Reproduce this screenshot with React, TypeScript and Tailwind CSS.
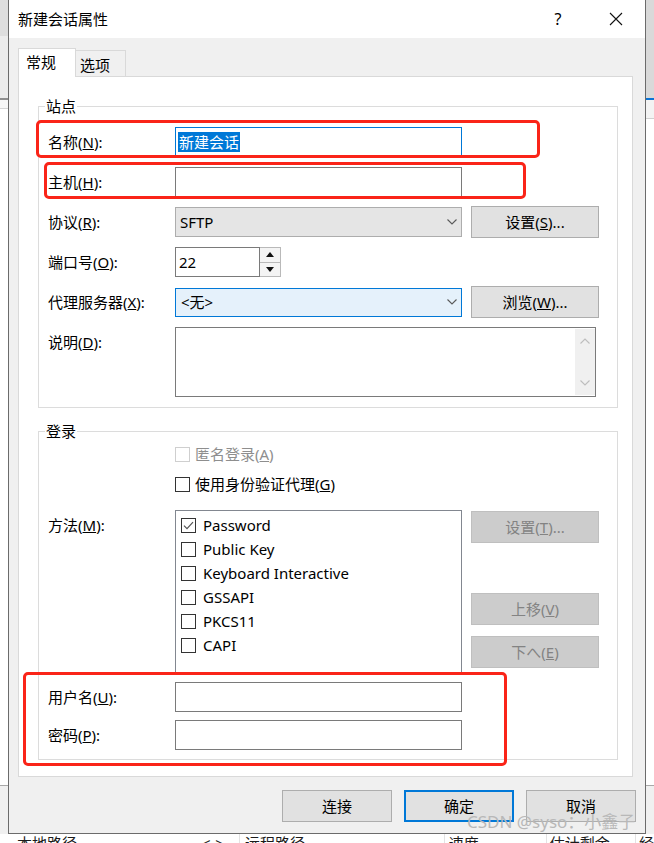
import React from 'react';

type Kids = { children?: React.ReactNode };

function Chevron({ color = '#5a5a5a', up = false }: { color?: string; up?: boolean }) {
  return (
    <svg width="10" height="6" viewBox="0 0 10 6">
      <path d={up ? 'M0.5 5.5 L5 1 L9.5 5.5' : 'M0.5 0.5 L5 5 L9.5 0.5'} fill="none" stroke={color} strokeWidth="1.1" />
    </svg>
  );
}

function Tri({ up }: { up?: boolean }) {
  return (
    <svg width="8" height="5" viewBox="0 0 8 5">
      <path d={up ? 'M0 5 L4 0 L8 5 Z' : 'M0 0 L4 5 L8 0 Z'} fill="#111" />
    </svg>
  );
}

function Box({ checked, disabled }: { checked?: boolean; disabled?: boolean }) {
  return (
    <span
      className={
        disabled
          ? 'flex h-[15px] w-[15px] shrink-0 items-center justify-center border border-[#cfcfcf] bg-white'
          : 'flex h-[15px] w-[15px] shrink-0 items-center justify-center border border-[#333333] bg-white'
      }
    >
      {checked && (
        <svg width="11" height="9" viewBox="0 0 11 9">
          <path d="M1 4.6 L4 7.6 L10 1.2" fill="none" stroke="#555" strokeWidth="1.2" />
        </svg>
      )}
    </span>
  );
}

function Btn({ children, disabled, className = '' }: Kids & { disabled?: boolean; className?: string }) {
  return (
    <div
      className={
        (disabled
          ? 'flex h-[32px] w-[128px] items-center justify-center border border-[#bfbfbf] bg-[#cccccc] text-[#838383] '
          : 'flex h-[32px] w-[128px] items-center justify-center border border-[#adadad] bg-[#e1e1e1] ') + className
      }
    >
      {children}
    </div>
  );
}

function Row({ label, children, className = '' }: Kids & { label: React.ReactNode; className?: string }) {
  return (
    <div className={'flex h-[30px] items-center ' + className}>
      <div className="w-[136px] pl-[9px]">{label}</div>
      {children}
    </div>
  );
}

function TextInput() {
  return <div className="h-[30px] w-[287px] border border-[#7a7a7a] bg-white" />;
}

function LeftStrip() {
  return (
    <div className="flex w-[8px] flex-col">
      <div className="h-[36px] bg-[#dedede]" />
      <div className="h-[62px] bg-[#ececec]" />
      <div className="h-[2px] bg-[#8f8f8f]" />
      <div className="h-[8px] bg-[#f7f7f7]" />
      <div className="h-px bg-[#d5d5d5]" />
      <div className="flex-1 bg-white" />
      <div className="h-px bg-[#a8a8a8]" />
      <div className="h-[48px] bg-[#f0f0f0]" />
    </div>
  );
}

function RightStrip() {
  return (
    <div className="flex w-[8px] flex-col">
      <div className="h-[98px] bg-[#d9d9d9]" />
      <div className="h-[2px] bg-[#0a74d6]" />
      <div className="h-[18px] bg-[#f3f3f3]" />
      <div className="h-px bg-[#d0d0d0]" />
      <div className="flex-1 bg-white" />
      <div className="h-px bg-[#a8a8a8]" />
      <div className="h-[48px] bg-[#f0f0f0]" />
    </div>
  );
}

const methods = ['Password', 'Public Key', 'Keyboard Interactive', 'GSSAPI', 'PKCS11', 'CAPI'];

function Dialog() {
  return (
    <div className="flex w-[638px] flex-col border-x border-b border-[#6b6b6b] bg-[#f0f0f0]">
      {/* title bar */}
      <div className="flex h-[38px] items-center bg-white pl-[9px]">
        <span>新建会话属性</span>
        <span className="ml-auto flex w-[58px] justify-center text-[16px]">?</span>
        <span className="flex w-[58px] justify-center">
          <svg width="14" height="14" viewBox="0 0 14 14">
            <path d="M1 1 L13 13 M13 1 L1 13" stroke="#111" strokeWidth="1.1" />
          </svg>
        </span>
      </div>

      {/* tabs */}
      <div className="flex h-[38px] items-end pl-[9px]">
        <div className="relative z-10 -mb-px h-[29px] w-[58px] border-x border-t border-[#d9d9d9] bg-white pl-[7px] pt-[3px]">
          常规
        </div>
        <div className="h-[26px] w-[50px] border-r border-t border-[#d9d9d9] bg-[#f0f0f0] pl-[4px] pt-[4px]">选项</div>
      </div>

      {/* panel */}
      <div className="ml-[9px] h-[701px] w-[615px] border border-[#d9d9d9] bg-white pl-[19px] pt-[20px]">
        <fieldset className="w-[580px] border border-[#dcdcdc] pb-[10px]">
          <legend className="ml-[6px] px-px leading-[18px]">站点</legend>
          <div className="flex flex-col gap-[10px] pt-[12px]">
            <Row label={<>名称(<u>N</u>):</>}>
              <div className="flex h-[30px] w-[287px] items-center border border-[#0078d7] bg-white pl-[2px]">
                <span className="bg-[#0078d7] px-px text-white">新建会话</span>
              </div>
            </Row>
            <Row label={<>主机(<u>H</u>):</>}>
              <TextInput />
            </Row>
            <Row label={<>协议(<u>R</u>):</>}>
              <div className="flex h-[30px] w-[287px] items-center border border-[#adadad] bg-[#e5e5e5] pl-[4px] pr-[4px]">
                <span>SFTP</span>
                <span className="ml-auto flex">
                  <Chevron />
                </span>
              </div>
              <Btn className="ml-[9px]">
                设置(<u>S</u>)...
              </Btn>
            </Row>
            <Row label={<>端口号(<u>O</u>):</>}>
              <div className="flex h-[30px] w-[106px]">
                <div className="flex w-[85px] items-center border border-[#7a7a7a] bg-white pl-[3px]">22</div>
                <div className="flex w-[21px] flex-col border-y border-r border-[#b9b9b9] bg-[#f4f4f4]">
                  <div className="flex flex-1 items-center justify-center border-b border-[#b9b9b9]">
                    <Tri up />
                  </div>
                  <div className="flex flex-1 items-center justify-center">
                    <Tri />
                  </div>
                </div>
              </div>
            </Row>
            <Row label={<>代理服务器(<u>X</u>):</>}>
              <div className="flex h-[29px] w-[287px] items-center border border-[#0078d7] bg-[#e5f1fb] pl-[5px] pr-[4px]">
                <span>&lt;无&gt;</span>
                <span className="ml-auto flex">
                  <Chevron />
                </span>
              </div>
              <Btn className="ml-[9px]">
                浏览(<u>W</u>)...
              </Btn>
            </Row>
            <div className="flex h-[70px] items-start">
              <div className="flex h-[30px] w-[136px] items-center pl-[9px]">
                说明(<u>D</u>):
              </div>
              <div className="flex h-[70px] w-[421px] justify-end border border-[#7a7a7a] bg-white py-px">
                <div className="flex w-[20px] flex-col items-center justify-between bg-[#f0f0f0] py-[9px]">
                  <Chevron color="#bdbdbd" up />
                  <Chevron color="#bdbdbd" />
                </div>
              </div>
            </div>
          </div>
        </fieldset>

        <fieldset className="mt-[14px] w-[580px] border border-[#dcdcdc] pb-[9px]">
          <legend className="ml-[6px] px-px leading-[18px]">登录</legend>
          <div className="flex flex-col pt-[2px]">
            <div className="flex h-[24px] items-center pl-[136px]">
              <Box disabled />
              <span className="ml-[5px] text-[#8e8e8e]">
                匿名登录(<u>A</u>)
              </span>
            </div>
            <div className="mt-[6px] flex h-[24px] items-center pl-[136px]">
              <Box />
              <span className="ml-[5px]">
                使用身份验证代理(<u>G</u>)
              </span>
            </div>
            <div className="mt-[14px] flex h-[163px] items-start">
              <div className="flex h-[30px] w-[136px] items-center pl-[9px]">
                方法(<u>M</u>):
              </div>
              <div className="h-[163px] w-[287px] border border-[#828790] bg-white pl-[5px] pt-[2px]">
                {methods.map((m, i) => (
                  <div key={m} className="flex h-[24px] items-center gap-[7px]">
                    <Box checked={i === 0} />
                    <span>{m}</span>
                  </div>
                ))}
              </div>
              <div className="ml-[9px] flex flex-col pt-px">
                <Btn disabled>
                  设置(<u>T</u>)...
                </Btn>
                <Btn disabled className="mt-[50px]">
                  上移(<u>V</u>)
                </Btn>
                <Btn disabled className="mt-[11px]">
                  下へ(<u>E</u>)
                </Btn>
              </div>
            </div>
            <Row className="mt-[9px]" label={<>用户名(<u>U</u>):</>}>
              <TextInput />
            </Row>
            <Row className="mt-[8px]" label={<>密码(<u>P</u>):</>}>
              <TextInput />
            </Row>
          </div>
        </fieldset>
      </div>

      {/* dialog buttons */}
      <div className="mt-[13px] flex justify-end gap-[12px] pr-[9px]">
        <div className="flex h-[32px] w-[110px] items-center justify-center border border-[#adadad] bg-[#e1e1e1]">连接</div>
        <div className="flex h-[32px] w-[110px] items-center justify-center border-2 border-[#0078d7] bg-[#e1e1e1]">确定</div>
        <div className="flex h-[32px] w-[110px] items-center justify-center border border-[#adadad] bg-[#e1e1e1]">取消</div>
      </div>
    </div>
  );
}

function HeaderRow() {
  return (
    <div className="flex h-[9px] overflow-hidden bg-white leading-[15px] text-[#1a1a1a]">
      <div className="flex w-[241px] pl-[17px] pr-[15px] pt-[2px]">
        <span>本地路径</span>
        <span className="ml-auto">&lt;-&gt;</span>
      </div>
      <div className="w-[207px] border-l border-[#e3e3e3] pl-[5px] pt-[2px]">远程路径</div>
      <div className="w-[103px] border-l border-[#e3e3e3] pl-[4px] pt-[2px]">速度</div>
      <div className="w-[90px] border-l border-[#e3e3e3] pl-[3px] pt-[2px]">估计剩余...</div>
      <div className="flex-1 border-l border-[#e3e3e3] pl-[3px] pt-[2px]">经</div>
    </div>
  );
}

export default function App() {
  return (
    <div className="relative flex h-[843px] w-[654px] flex-col overflow-hidden bg-white font-['Noto_Sans','Noto_Sans_CJK_SC',sans-serif] text-[15px] leading-[20px] text-black">
      <div className="flex h-[834px]">
        <LeftStrip />
        <Dialog />
        <RightStrip />
      </div>
      <HeaderRow />

      {/* red annotation frames */}
      <div className="pointer-events-none absolute left-[36px] top-[120px] h-[38px] w-[504px] rounded-[5px] border-[3px] border-[#fa2418]" />
      <div className="pointer-events-none absolute left-[44px] top-[162px] h-[37px] w-[482px] rounded-[5px] border-[3px] border-[#fa2418]" />
      <div className="pointer-events-none absolute left-[23px] top-[672px] h-[94px] w-[484px] rounded-[5px] border-[3px] border-[#fa2418]" />

      {/* watermark */}
      <div className="pointer-events-none absolute left-[467px] top-[811px] text-[17px] leading-[22px] text-[#b8b8b8]">
        CSDN @syso：小鑫子
      </div>
    </div>
  );
}
